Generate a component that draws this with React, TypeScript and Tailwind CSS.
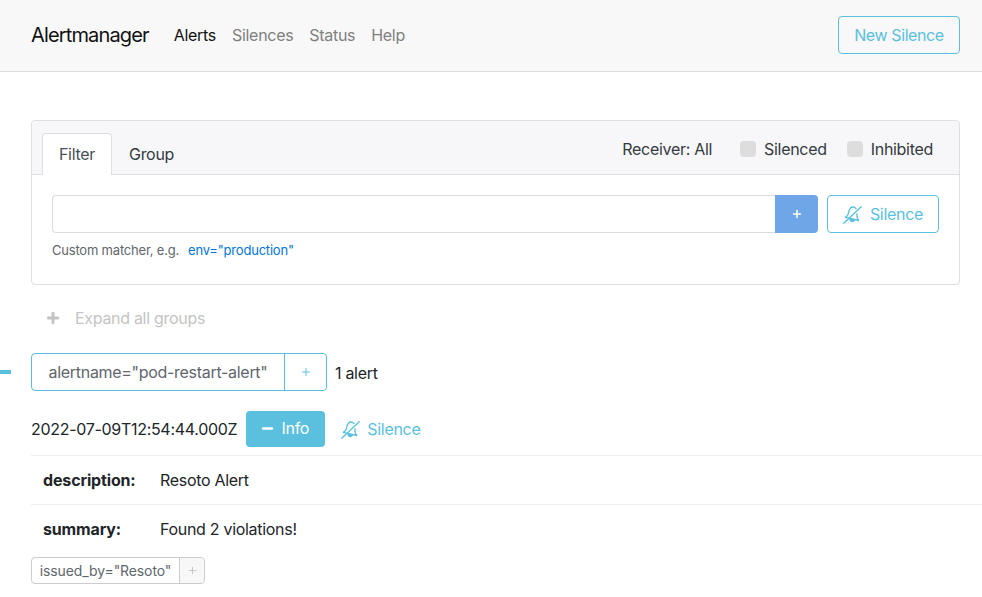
import { Plus, Minus } from "lucide-react";

function BellSlash({ className }: { className?: string }) {
    return (
        <svg viewBox="0 0 20 20" fill="none" stroke="currentColor" strokeWidth="1.4" strokeLinecap="round" strokeLinejoin="round" className={className}>
            <path d="M.8 19.200 19.200 1.800" />
            <path d="M2.500 13c2-.9 3-2.600 3.400-5 .5-3 1.600-5 3.400-5.800" />
            <path d="M9.300 2.200c1.400-.4 3 .2 4.500 1.600" />
            <path d="M2.500 13 16.500 16.300c-1.500-1.500-2-3.700-1.800-7" />
            <path d="M7.500 14.500c-.4 1.300.3 2.500 1.600 2.800 1.300.3 2.400-.3 2.800-1.500z" fill="currentColor" />
        </svg>
    );
}

export default function App() {
    return (
        <div className="min-h-screen bg-white text-[16px] tracking-[-0.3px] text-[#212529] font-['Inter','Liberation_Sans',sans-serif] overflow-hidden">
            <nav className="h-[72px] bg-[#f8f8f8] border-b border-[#dcdcdc] pl-[31px] pr-[22px] pb-[1px] flex items-center">
                <a className="text-[20px] text-[#111] tracking-[-0.85px] mr-[25px]">Alertmanager</a>
                <ul className="flex gap-[16px] flex-1">
                    <li className="text-[#111]">Alerts</li>
                    <li className="text-[#808080]">Silences</li>
                    <li className="text-[#808080]">Status</li>
                    <li className="text-[#808080]">Help</li>
                </ul>
                <button className="h-[38px] w-[122px] border border-[#5bc0de] rounded tracking-[-0.4px] text-[#5bc0de]">New Silence</button>
            </nav>

            <main className="pt-[48px] pl-[31px]">
                <section className="w-[929px] h-[165px] border border-[#dfdfdf] rounded">
                    <div className="h-[54px] bg-[#f7f7f9] border-b border-[#dfdfdf] rounded-t flex items-end pl-[10px] pr-[26px]">
                        <div className="h-[42px] w-[70px] pb-[2px] bg-white border border-b-0 border-[#dfdfdf] rounded-t flex items-center justify-center text-[#495057] -mb-px">Filter</div>
                        <div className="h-[42px] ml-[17px] pt-[2px] flex items-center text-[#343a40]">Group</div>
                        <div className="ml-auto h-[54px] pt-[3px] flex items-center text-[#343a40]">
                            <span className="mr-[28px]">Receiver: All</span>
                            <span className="w-[16px] h-[16px] bg-[#dddddd] rounded mr-[8px]" />
                            <span className="mr-[20px]">Silenced</span>
                            <span className="w-[16px] h-[16px] bg-[#dddddd] rounded mr-[8px]" />
                            <span>Inhibited</span>
                        </div>
                    </div>
                    <div className="pt-[20px] pl-[20px]">
                        <div className="flex">
                            <div className="w-[723px] h-[38px] border border-r-0 border-[#dcdcdc] rounded-l" />
                            <button className="w-[43px] h-[38px] bg-[#6ea6e8] text-white rounded-r flex items-center justify-center">
                                <Plus size={12} strokeWidth={3} />
                            </button>
                            <button className="ml-[9px] w-[112px] h-[38px] border border-[#5bc0de] rounded text-[#5bc0de] flex items-center justify-center gap-[8px]">
                                <BellSlash className="w-[19px] h-[19px]" />
                                Silence
                            </button>
                        </div>
                        <p className="mt-[8px] text-[13px] leading-[18px] tracking-[-0.2px] text-[#5f666d]">
                            Custom matcher, e.g.
                            <a className="ml-[9px] text-[#0275d8]">env="production"</a>
                        </p>
                    </div>
                </section>

                <div className="h-[24px] mt-[21px] ml-[14px] flex items-center text-[#c4c4c4]">
                    <Plus size={16} strokeWidth={4.5} className="mr-[14px]" />
                    Expand all groups
                </div>

                <div className="mt-[23px] flex items-center">
                    <div className="-ml-[31px] mr-[20px] w-[11px] h-[4px] bg-[#5bc0de]" />
                    <div className="flex h-[38px] border border-[#5bc0de] rounded">
                        <span className="w-[253px] border-r border-[#5bc0de] flex items-center justify-center text-[#5f666d]">alertname="pod-restart-alert"</span>
                        <span className="w-[41px] flex items-center justify-center text-[#5bc0de]">
                            <Plus size={12} strokeWidth={2} />
                        </span>
                    </div>
                    <span className="ml-[8px] pt-[1px]">1 alert</span>
                </div>

                <div className="mt-[20px] flex items-center">
                    <span>2022-07-09T12:54:44.000Z</span>
                    <button className="ml-[9px] w-[79px] h-[36px] bg-[#5bc0de] text-white rounded pb-[2px] pr-[2px] flex items-center justify-center gap-[6px]">
                        <Minus size={15} strokeWidth={4} />
                        Info
                    </button>
                    <span className="ml-[16px] flex items-center gap-[7px] text-[#5bc0de]">
                        <BellSlash className="w-[19px] h-[19px]" />
                        Silence
                    </span>
                </div>

                <div className="mt-[8px] border-t border-[#eeeeee] h-[49px] pl-[12px] flex items-center">
                    <b className="w-[117px] font-bold tracking-[-0.15px]">description:</b>
                    <span>Resoto Alert</span>
                </div>
                <div className="border-t border-[#eeeeee] h-[49px] pl-[12px] flex items-center">
                    <b className="w-[117px] font-bold tracking-[-0.15px]">summary:</b>
                    <span>Found 2 violations!</span>
                </div>

                <div className="mt-[4px] inline-flex h-[27px] border border-[#cccccc] rounded text-[14px] tracking-[-0.1px] text-[#5f666d]">
                    <span className="w-[147px] flex items-center justify-center">issued_by="Resoto"</span>
                    <span className="w-[25px] bg-[#f7f7f7] border-l border-[#cccccc] flex items-center justify-center text-[#c4c4c4] rounded-r">
                        <Plus size={11} strokeWidth={2} />
                    </span>
                </div>
            </main>
        </div>
    );
}
